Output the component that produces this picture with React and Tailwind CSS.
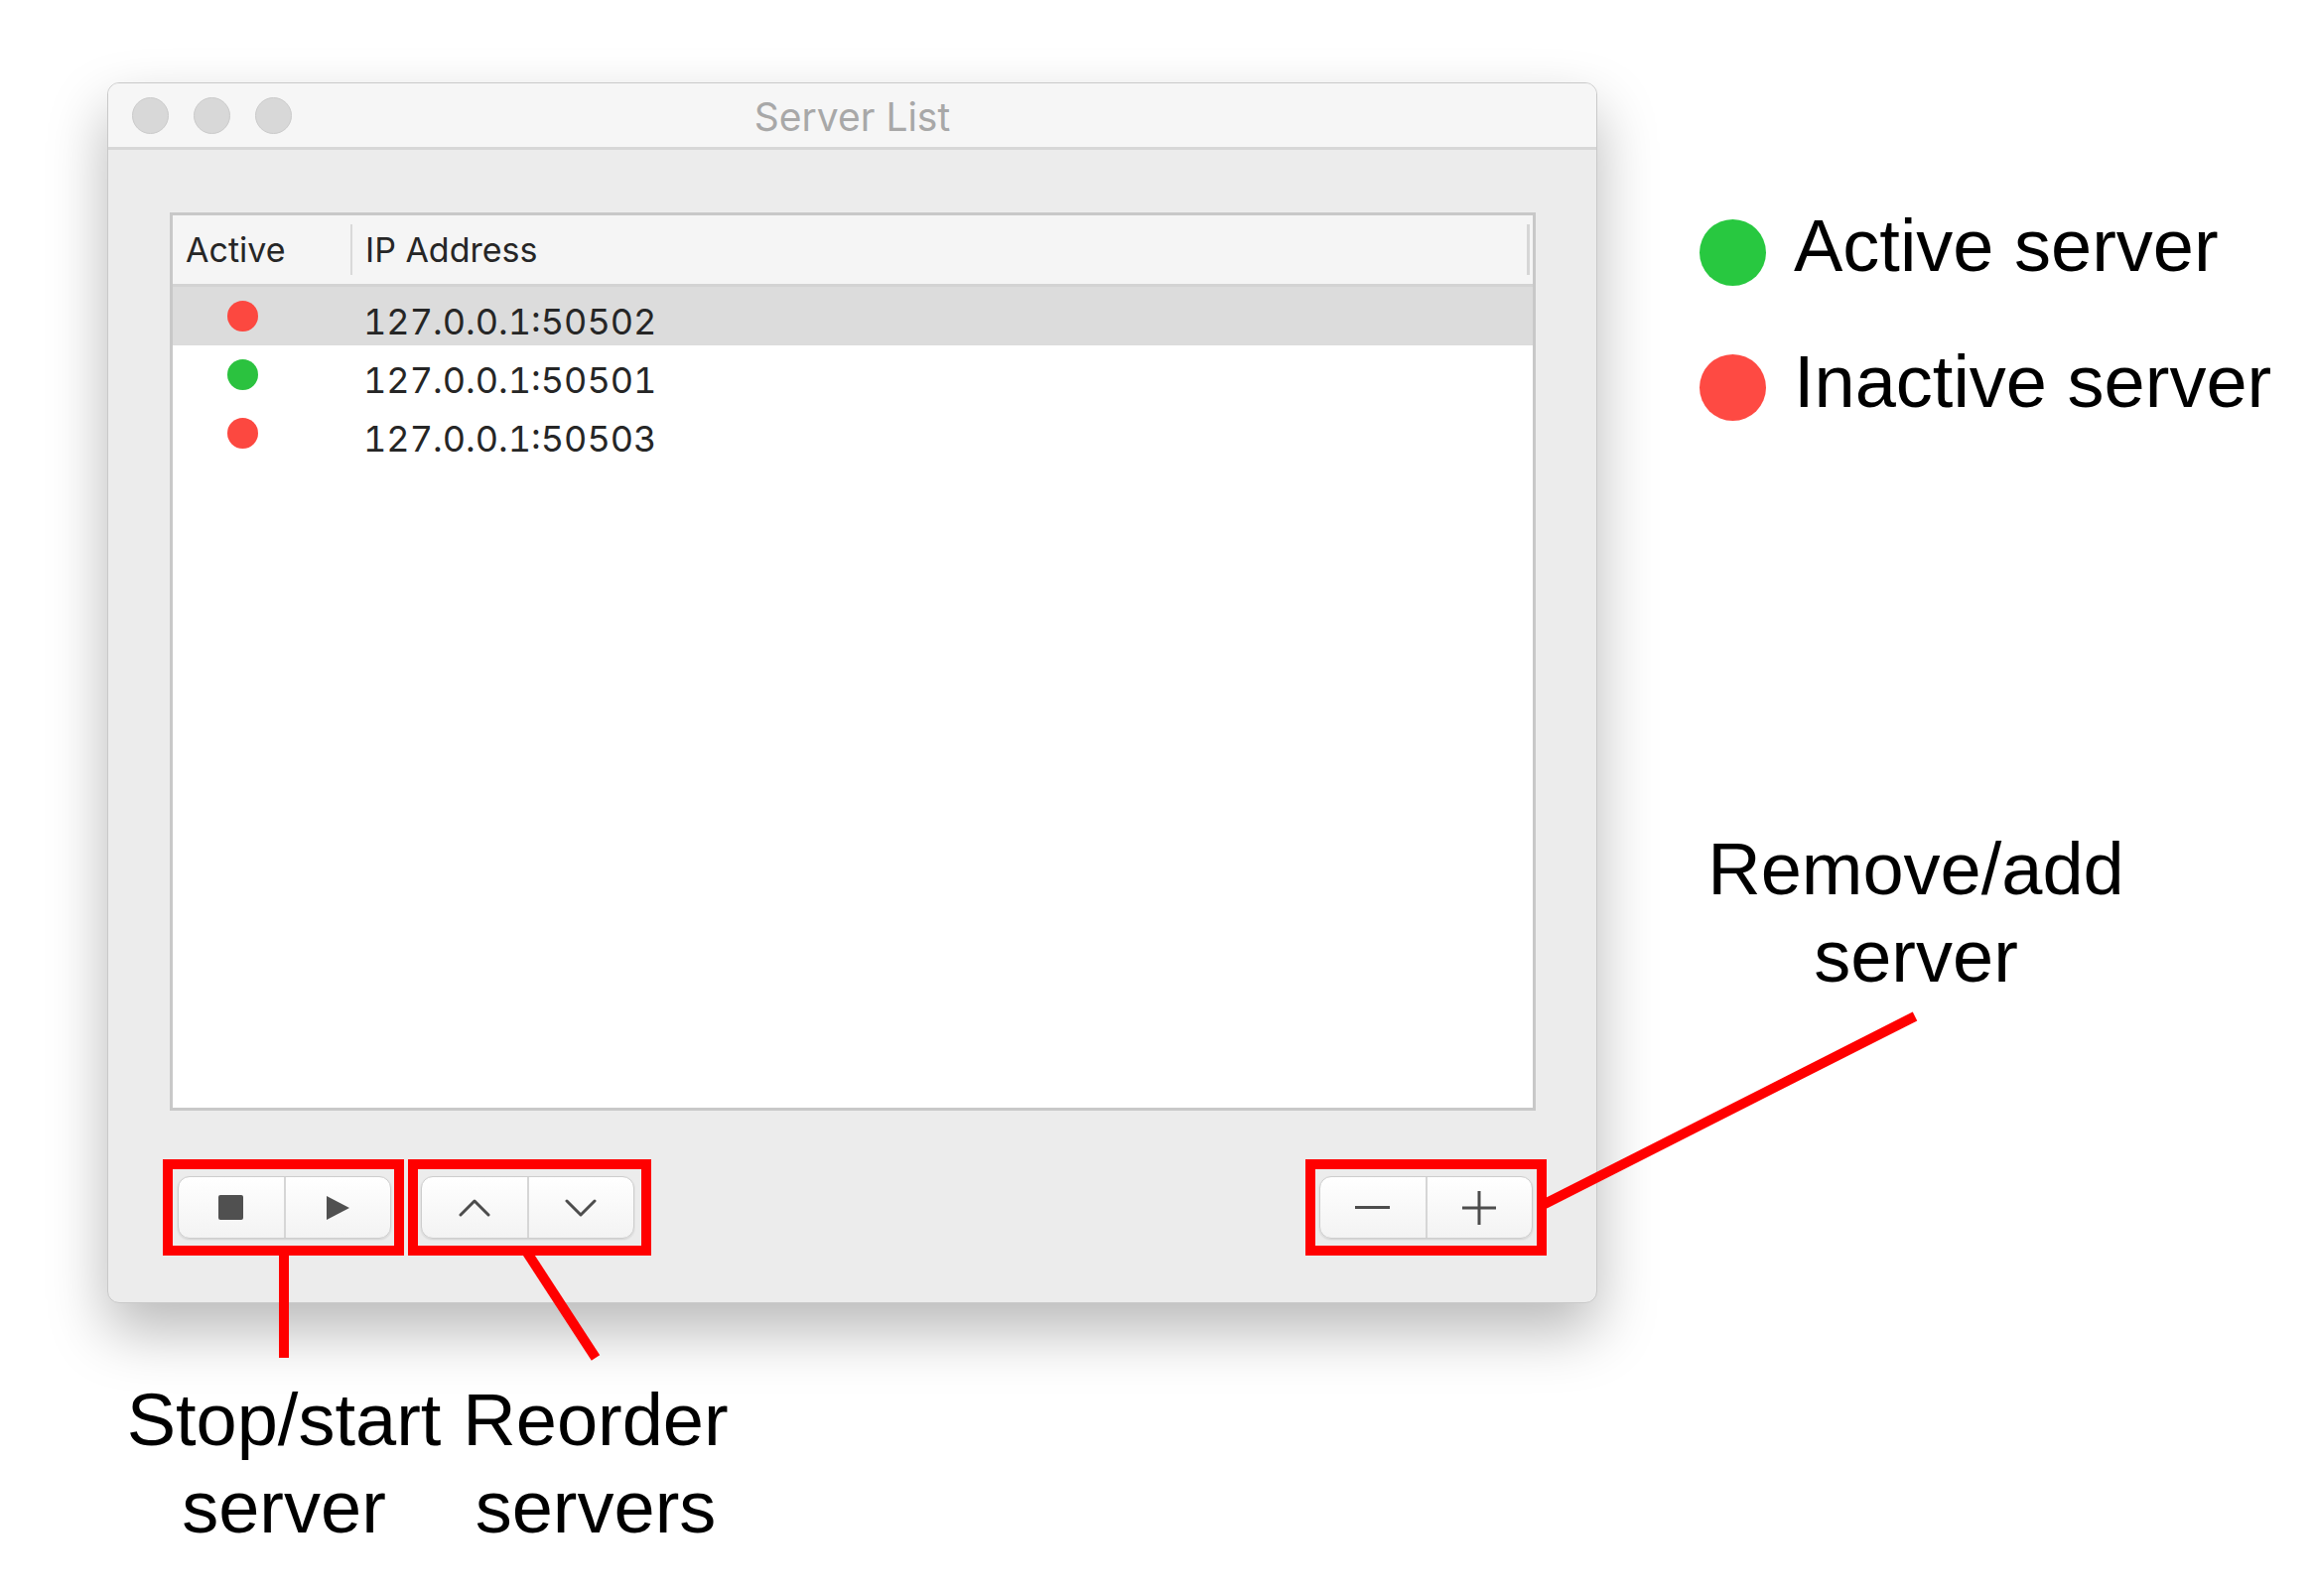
import React from "react";

const rows = [
  { ip: "127.0.0.1:50502", active: false, selected: true },
  { ip: "127.0.0.1:50501", active: true, selected: false },
  { ip: "127.0.0.1:50503", active: false, selected: false },
];

function Segmented({ left, right }) {
  return (
    <div className="flex h-[63px] w-[215px] rounded-[12px] border border-[#cdcdcd] bg-gradient-to-b from-[#ffffff] to-[#f3f3f3] shadow-[0_1px_2px_rgba(0,0,0,0.12)]">
      <div className="flex flex-1 items-center justify-center">{left}</div>
      <div className="w-[2px] bg-[#d6d6d6]" />
      <div className="flex flex-1 items-center justify-center">{right}</div>
    </div>
  );
}

function Window() {
  return (
    <div
      className="flex h-[1230px] w-[1501px] flex-col overflow-hidden rounded-[12px] border border-[#c9c9c9] bg-[#ececec] shadow-[0_28px_60px_rgba(0,0,0,0.28)]"
      style={{ fontFamily: "Inter, 'Noto Sans', sans-serif" }}
    >
      {/* Title bar */}
      <div className="relative flex h-[67px] shrink-0 items-center border-b-[3px] border-[#d7d7d7] bg-[#f6f6f6] pl-[24px]">
        <div className="flex gap-[25px]">
          <div className="h-[37px] w-[37px] rounded-full border border-[#cbcbcb] bg-[#d8d8d8]" />
          <div className="h-[37px] w-[37px] rounded-full border border-[#cbcbcb] bg-[#d8d8d8]" />
          <div className="h-[37px] w-[37px] rounded-full border border-[#cbcbcb] bg-[#d8d8d8]" />
        </div>
        <div className="absolute inset-0 flex items-center justify-center pt-[5px] text-[39px] text-[#a8a8a8]">
          Server List
        </div>
      </div>

      {/* Body */}
      <div className="flex flex-1 flex-col pl-[62px] pr-[61px] pt-[63px]">
        <div className="flex h-[905px] flex-col border-[3px] border-[#c8c8c8] bg-white">
          {/* header */}
          <div className="flex h-[72px] shrink-0 items-center border-b-[3px] border-[#d3d3d3] bg-[#f5f5f5] text-[34px] text-[#262626]">
            <div className="flex w-[181px] items-center justify-between pl-[13px]">
              <span>Active</span>
              <div className="h-[51px] w-[2px] bg-[#d9d9d9]" />
            </div>
            <div className="flex flex-1 items-center justify-between pl-[13px] pr-[3px]">
              <span>IP Address</span>
              <div className="h-[51px] w-[3px] bg-[#d6d6d6]" />
            </div>
          </div>
          {/* rows */}
          {rows.map((r) => (
            <div
              key={r.ip}
              className={`flex h-[59px] items-center text-[36px] tabular-nums text-[#262626] ${
                r.selected ? "bg-[#dcdcdc]" : "bg-white"
              }`}
            >
              <div className="w-[192px] pl-[55px]">
                <div
                  className={`h-[31px] w-[31px] rounded-full ${
                    r.active ? "bg-[#2bc23f]" : "bg-[#fc4840]"
                  }`}
                />
              </div>
              <div className="pt-[10px]">{r.ip}</div>
            </div>
          ))}
        </div>

        {/* Buttons */}
        <div className="mt-[66px] flex items-center justify-between pl-[8px] pr-[3px]">
          <div className="flex gap-[30px]">
            <div className="relative">
              <Segmented
                left={<div className="h-[25px] w-[25px] rounded-[2px] bg-[#505050]" />}
                right={
                  <svg width="25" height="26" viewBox="0 0 25 26">
                    <path d="M1 1 L24 13 L1 25 Z" fill="#505050" />
                  </svg>
                }
              />
              <div className="pointer-events-none absolute -bottom-[17px] -left-[15px] -right-[13px] -top-[17px] border-[10px] border-[#ff0000]" />
            </div>
            <div className="relative">
              <Segmented
                left={
                  <svg width="32" height="20" viewBox="0 0 32 20">
                    <path d="M2 17 L16 3 L30 17" fill="none" stroke="#4d4d4d" strokeWidth="3" strokeLinecap="round" strokeLinejoin="round" />
                  </svg>
                }
                right={
                  <svg width="32" height="20" viewBox="0 0 32 20">
                    <path d="M2 3 L16 17 L30 3" fill="none" stroke="#4d4d4d" strokeWidth="3" strokeLinecap="round" strokeLinejoin="round" />
                  </svg>
                }
              />
              <div className="pointer-events-none absolute -bottom-[17px] -left-[13px] -right-[17px] -top-[17px] border-[10px] border-[#ff0000]" />
            </div>
          </div>
          <div className="relative">
            <Segmented
              left={<div className="h-[3px] w-[35px] bg-[#4d4d4d]" />}
              right={
                <svg width="36" height="36" viewBox="0 0 36 36">
                  <path d="M18 1 V35 M1 18 H35" fill="none" stroke="#4d4d4d" strokeWidth="3" />
                </svg>
              }
            />
            <div className="pointer-events-none absolute -bottom-[17px] -left-[14px] -right-[14px] -top-[17px] border-[10px] border-[#ff0000]" />
          </div>
        </div>
      </div>
    </div>
  );
}

export default function App() {
  return (
    <div
      className="relative h-[1608px] w-[2332px] overflow-hidden bg-white"
      style={{ fontFamily: "'Liberation Sans', Arial, sans-serif" }}
    >
      <div className="pl-[108px] pt-[83px]">
        <Window />
      </div>

      {/* connector lines */}
      <svg className="pointer-events-none absolute inset-0" width="2332" height="1608" viewBox="0 0 2332 1608">
        <line x1="286" y1="1264" x2="286" y2="1368" stroke="#ff0000" strokeWidth="10" />
        <line x1="531" y1="1262" x2="600" y2="1368" stroke="#ff0000" strokeWidth="10" />
        <line x1="1556" y1="1213" x2="1929" y2="1024" stroke="#ff0000" strokeWidth="10" />
      </svg>

      {/* legend */}
      <div className="absolute left-[1712px] top-[211px] flex flex-col gap-[60px] text-[74px] leading-[74px] text-black">
        <div className="flex items-start gap-[28px]">
          <div className="mt-[10px] h-[67px] w-[67px] rounded-full bg-[#28c840]" />
          <span>Active server</span>
        </div>
        <div className="flex items-start gap-[28px]">
          <div className="mt-[9px] h-[67px] w-[67px] rounded-full bg-[#fe4a43]" />
          <span>Inactive server</span>
        </div>
      </div>

      {/* labels */}
      <div className="absolute left-[1630px] top-[832px] w-[600px] text-center text-[74px] leading-[88px] text-black">
        Remove/add
        <br />
        server
      </div>
      <div className="absolute left-[86px] top-[1387px] w-[400px] text-center text-[74px] leading-[88px] text-black">
        Stop/start
        <br />
        server
      </div>
      <div className="absolute left-[400px] top-[1387px] w-[400px] text-center text-[74px] leading-[88px] text-black">
        Reorder
        <br />
        servers
      </div>
    </div>
  );
}
